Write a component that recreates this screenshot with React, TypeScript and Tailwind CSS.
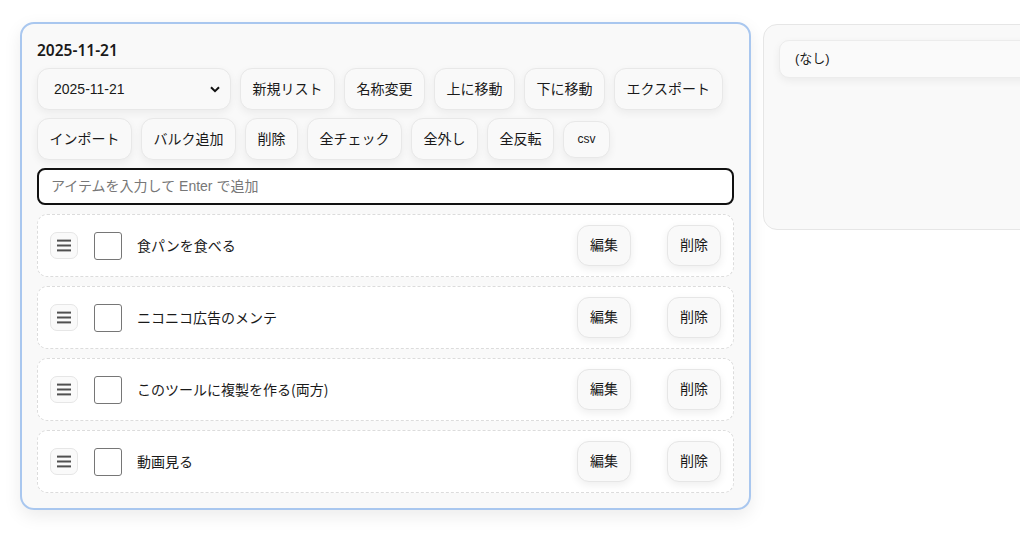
import React from "react";

const btnFont = { fontFamily: '"Liberation Sans", "Noto Sans CJK JP", sans-serif' };

function Btn({ children, small = false }: { children: React.ReactNode; small?: boolean }) {
  return (
    <button
      className={
        small
          ? "h-[37px] px-[13.5px] rounded-[12px] border border-[#e8e8e8] bg-[#f9f9f9] text-[12px] text-[#1a1a1a] shadow-[0_3px_8px_rgba(0,0,0,0.06)]"
          : "h-[42px] px-[11.5px] rounded-[12px] border border-[#e8e8e8] bg-[#f9f9f9] text-[14px] text-[#1a1a1a] shadow-[0_3px_8px_rgba(0,0,0,0.06)]"
      }
      style={btnFont}
    >
      {children}
    </button>
  );
}

function Handle() {
  return (
    <div className="w-[28px] h-[27px] rounded-[7px] border border-[#e6e6e6] bg-[#fafafa] flex items-center justify-center">
      <svg width="14" height="13" viewBox="0 0 14 13">
        <rect x="0" y="0.6" width="14" height="2" fill="#505050" />
        <rect x="0" y="5.5" width="14" height="2" fill="#505050" />
        <rect x="0" y="10.4" width="14" height="2" fill="#505050" />
      </svg>
    </div>
  );
}

function Item({ text }: { text: string }) {
  return (
    <div className="h-[63px] rounded-[10px] border border-dashed border-[#dcdcdc] bg-white flex items-center pl-[12px] pr-[12px]">
      <Handle />
      <div className="ml-[16px] w-[28px] h-[28px] rounded-[3px] border border-[#767676] bg-white" />
      <span
        className="ml-[15px] text-[14px] text-[#1a1a1a]"
        style={{ fontFamily: '"Noto Sans CJK JP", sans-serif' }}
      >
        {text}
      </span>
      <div className="ml-auto flex items-center gap-[36px]">
        <button
          className="h-[41px] w-[54px] rounded-[12px] border border-[#e6e6e6] bg-[#f9f9f9] text-[14px] text-[#1a1a1a] shadow-[0_3px_8px_rgba(0,0,0,0.07)]"
          style={btnFont}
        >
          編集
        </button>
        <button
          className="h-[41px] w-[54px] rounded-[12px] border border-[#e6e6e6] bg-[#f9f9f9] text-[14px] text-[#1a1a1a] shadow-[0_3px_8px_rgba(0,0,0,0.07)]"
          style={btnFont}
        >
          削除
        </button>
      </div>
    </div>
  );
}

export default function App() {
  return (
    <div
      className="w-[1020px] h-[558px] overflow-hidden bg-white text-[#1a1a1a]"
      style={{ fontFamily: '"Noto Sans", "Noto Sans CJK JP", sans-serif' }}
    >
      <div className="flex items-start gap-[12px] pl-[20px] pt-[22px]">
        <div className="w-[731px] shrink-0 rounded-[14px] border-2 border-[#a9c7ef] bg-[#f9f9f9] p-[15px] shadow-[0_6px_18px_rgba(0,0,0,0.08)]">
          <div className="text-[15.5px] font-semibold leading-[22px]">2025-11-21</div>
          <div className="mt-[7px] flex flex-wrap gap-x-[9px] gap-y-[8px]">
            <div
              className="w-[194px] h-[42px] rounded-[12px] border border-[#e8e8e8] bg-[#f9f9f9] shadow-[0_3px_8px_rgba(0,0,0,0.06)] flex items-center justify-between pl-[16px] pr-[10px] text-[14px]"
              style={btnFont}
            >
              <span>2025-11-21</span>
              <svg width="10" height="7" viewBox="0 0 10 7">
                <path d="M1 1.2 L5 5.2 L9 1.2" fill="none" stroke="#111" strokeWidth="2" />
              </svg>
            </div>
            <Btn>新規リスト</Btn>
            <Btn>名称変更</Btn>
            <Btn>上に移動</Btn>
            <Btn>下に移動</Btn>
            <Btn>エクスポート</Btn>
            <Btn>インポート</Btn>
            <Btn>バルク追加</Btn>
            <Btn>削除</Btn>
            <Btn>全チェック</Btn>
            <Btn>全外し</Btn>
            <Btn>全反転</Btn>
            <div className="flex items-center h-[42px]">
              <Btn small>csv</Btn>
            </div>
          </div>
          <div
            className="mt-[8px] h-[37px] rounded-[8px] border-2 border-[#111] bg-white flex items-center px-[12px] text-[14px] text-[#777]"
            style={btnFont}
          >
            アイテムを入力して Enter で追加
          </div>
          <div className="mt-[9px] flex flex-col gap-[9px]">
            <Item text="食パンを食べる" />
            <Item text="ニコニコ広告のメンテ" />
            <Item text="このツールに複製を作る(両方)" />
            <Item text="動画見る" />
          </div>
        </div>
        <div className="mt-[2px] w-[320px] shrink-0 h-[206px] rounded-[14px] border border-[#e6e6e6] bg-[#f9f9f9] p-[15px]">
          <div
            className="h-[38px] rounded-[10px] border border-[#ececec] bg-[#fafafa] shadow-[0_3px_8px_rgba(0,0,0,0.06)] flex items-center pl-[15px] text-[13px]"
            style={btnFont}
          >
            (なし)
          </div>
        </div>
      </div>
    </div>
  );
}
